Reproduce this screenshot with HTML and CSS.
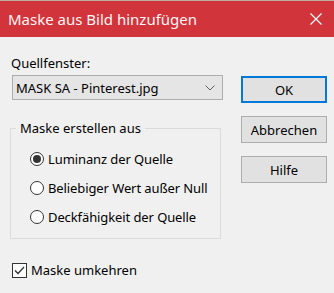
FILE: index.html
```html
<!DOCTYPE html>
<html>
<head>
    <title>Maske aus Bild hinzufügen</title>
    <link rel="stylesheet" href="styles.css">
</head>
<body>
    <div class="titlebar">
        <span class="title">Maske aus Bild hinzufügen</span>
        <svg class="close" width="12" height="12" viewBox="0 0 12 12">
            <path d="M0.5 0.5 L11.5 11.5 M11.5 0.5 L0.5 11.5" stroke="#ffffff" stroke-width="1.2" fill="none"/>
        </svg>
    </div>

    <div class="dialog">
        <div class="main">
            <div class="label">Quellfenster:</div>
            <div class="combo">
                <span>MASK SA - Pinterest.jpg</span>
                <svg width="10" height="6" viewBox="0 0 10 6">
                    <path d="M0.5 0.5 L5 5 L9.5 0.5" stroke="#606060" stroke-width="1" fill="none"/>
                </svg>
            </div>

            <div class="group">
                <div class="legend">Maske erstellen aus</div>
                <div class="radio-row">
                    <span class="radio checked"></span>
                    <span>Luminanz der Quelle</span>
                </div>
                <div class="radio-row">
                    <span class="radio"></span>
                    <span>Beliebiger Wert außer Null</span>
                </div>
                <div class="radio-row">
                    <span class="radio"></span>
                    <span>Deckfähigkeit der Quelle</span>
                </div>
            </div>

            <div class="check-row">
                <span class="checkbox">
                    <svg width="13" height="13" viewBox="0 0 13 13">
                        <path d="M2 6.5 L5 9.5 L11 3" stroke="#333333" stroke-width="1.3" fill="none"/>
                    </svg>
                </span>
                <span>Maske umkehren</span>
            </div>
        </div>

        <div class="buttons">
            <button class="default">OK</button>
            <button>Abbrechen</button>
            <button>Hilfe</button>
        </div>
    </div>
</body>
</html>
```

FILE: styles.css
```css
body {
    margin: 0;
    background: #f0f0f0;
    font-family: "Noto Sans", "Open Sans", sans-serif;
    font-size: 13px;
    color: #000000;
    width: 334px;
    height: 293px;
    overflow: hidden;
}

.titlebar {
    height: 36px;
    border-top: 1px solid #b9ada3;
    background: #d1343b;
    display: flex;
    align-items: center;
    justify-content: space-between;
    padding: 0 12px 0 8px;
}

.title {
    color: #fff4f6;
    font-size: 15px;
}

.dialog {
    display: flex;
    padding-left: 10px;
}

.main {
    width: 213px;
}

.label {
    margin-top: 17px;
    padding-left: 1px;
    line-height: 18px;
}

.combo {
    margin: 3px 0 0 2px;
    border: 1px solid #adadad;
    background: #e5e5e5;
    display: flex;
    align-items: center;
    justify-content: space-between;
    padding: 0 7px 0 3px;
    box-sizing: border-box;
    width: 211px;
    height: 25px;
}

.group {
    margin-top: 28px;
    width: 211px;
    height: 111px;
    box-sizing: border-box;
    border: 1px solid #dcdcdc;
    position: relative;
    padding-top: 15px;
}

.legend {
    position: absolute;
    top: -10px;
    left: 5px;
    padding: 0 4px;
    background: #f0f0f0;
    line-height: 18px;
}

.radio-row {
    display: flex;
    align-items: center;
    gap: 4px;
    margin-left: 19px;
    height: 29px;
    letter-spacing: -0.1px;
}

.radio {
    width: 14px;
    height: 14px;
    box-sizing: border-box;
    border: 1px solid #333333;
    border-radius: 50%;
    background: #ffffff;
    display: flex;
    align-items: center;
    justify-content: center;
}

.radio.checked::after {
    content: "";
    width: 8px;
    height: 8px;
    border-radius: 50%;
    background: #333333;
}

.check-row {
    display: flex;
    align-items: center;
    gap: 4px;
    margin: 22px 0 0 2px;
}

.checkbox {
    width: 15px;
    height: 15px;
    box-sizing: border-box;
    border: 1px solid #333333;
    background: #ffffff;
    display: flex;
}

.buttons {
    display: flex;
    flex-direction: column;
    gap: 13px;
    margin: 39px 0 0 18px;
}

button {
    width: 86px;
    height: 27px;
    border: 1px solid #adadad;
    background: #e1e1e1;
    font-family: inherit;
    font-size: 13px;
    color: #000000;
    padding: 0;
}

button.default {
    border: 2px solid #0078d7;
}
```
